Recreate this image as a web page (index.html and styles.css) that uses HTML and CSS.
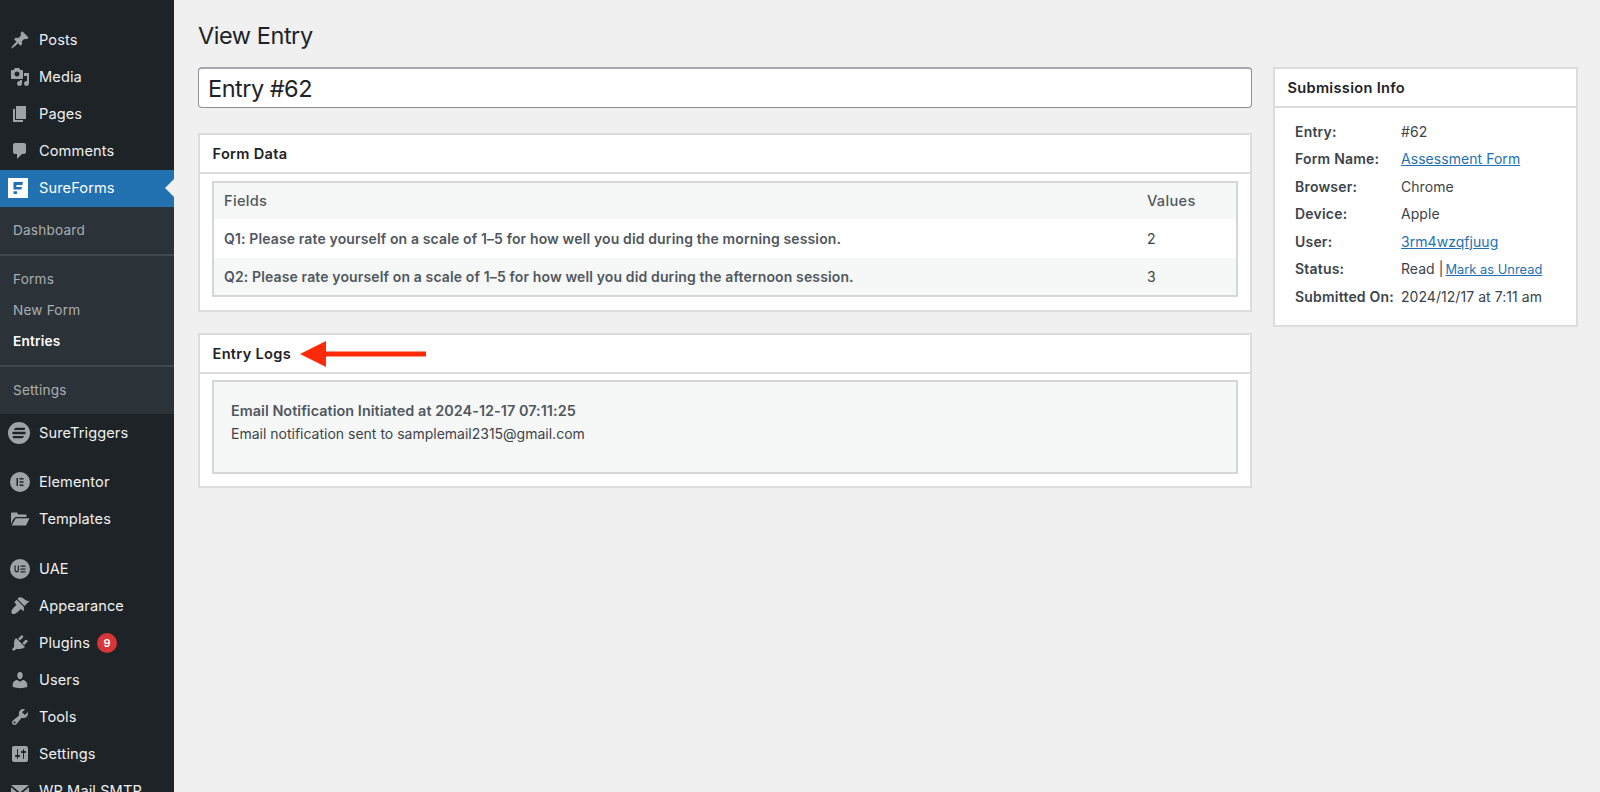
FILE: index.html
```html
<!DOCTYPE html>
<html lang="en">
<head>
<meta charset="utf-8">
<title>View Entry</title>
<link rel="stylesheet" href="styles.css">
</head>
<body>
<div class="app">
  <nav class="sidebar">
    <div class="stub"><svg class="stub-icon" viewBox="0 0 20 20"><circle cx="10" cy="10" r="8"/></svg></div>
    <a class="item"><svg class="ico" viewBox="0 0 20 20"><path d="M10.44 3.02l1.82-1.82 6.36 6.35-1.83 1.82c-1.05-.68-2.48-.57-3.41.36l-.75.75c-.92.93-1.04 2.35-.35 3.41l-1.83 1.82-2.41-2.41-2.8 2.79c-.42.42-3.38 2.71-3.8 2.29s1.86-3.39 2.28-3.81l2.79-2.79L4.1 9.36l1.83-1.82c1.05.69 2.48.57 3.4-.36l.75-.75c.93-.92 1.05-2.35.36-3.41z"/></svg><span>Posts</span></a>
    <a class="item"><svg class="ico" viewBox="0 0 20 20"><path d="M13 11V4c0-.55-.45-1-1-1h-1.67L9 1H5L3.67 3H2c-.55 0-1 .45-1 1v7c0 .55.45 1 1 1h10c.55 0 1-.45 1-1zM7 4.5c1.38 0 2.5 1.12 2.5 2.5S8.38 9.5 7 9.5 4.5 8.38 4.5 7 5.62 4.5 7 4.5zM14 6h5v10.5c0 1.38-1.12 2.5-2.5 2.5S14 17.88 14 16.5s1.12-2.5 2.5-2.5c.17 0 .34.02.5.05V9h-3V6zm-4 8.05V13h2v3.5c0 1.38-1.12 2.5-2.5 2.5S7 17.88 7 16.5 8.12 14 9.5 14c.17 0 .34.02.5.05z"/></svg><span>Media</span></a>
    <a class="item"><svg class="ico" viewBox="0 0 20 20"><path d="M6 15V2h10v13H6zm-1 1h8v2H3V5h2v11z"/></svg><span>Pages</span></a>
    <a class="item"><svg class="ico" viewBox="0 0 20 20"><path d="M5 2h9c1.1 0 2 .9 2 2v7c0 1.1-.9 2-2 2h-2l-5 5v-5H5c-1.1 0-2-.9-2-2V4c0-1.1.9-2 2-2z"/></svg><span>Comments</span></a>
    <a class="item active"><svg class="ico ico-sf" viewBox="0 0 20 20"><path class="sf-box" d="M0 0h20v20H0z"/><path class="sf-f" d="M5.500 4H15l-.6 3H8.600L8.200 9H14l-.6 2.600H5.500zM5.500 13.200H9V16H5.500z"/></svg><span>SureForms</span></a>
    <div class="submenu">
      <a class="sub">Dashboard</a>
      <div class="sub-sep"></div>
      <a class="sub">Forms</a>
      <a class="sub">New Form</a>
      <a class="sub current">Entries</a>
      <div class="sub-sep"></div>
      <a class="sub">Settings</a>
    </div>
    <a class="item"><svg class="ico ico-st" viewBox="0 0 22 22"><path fill-rule="evenodd" d="M11 0a11 11 0 1 1 0 22 11 11 0 0 1 0-22zM8 5.800c-1.200 0-1.800 1.600-2 2.200h10.300c.8 0 1.200-2.200.2-2.200zM5 9.800c-1 0-1 2.400 0 2.400h12c1 0 1-2.400 0-2.400zM5.500 14c-.8 0-1.200 2.200-.2 2.200H14c1.200 0 1.800-1.600 2-2.200z"/></svg><span>SureTriggers</span></a>
    <a class="item gap-top"><svg class="ico" viewBox="0 0 20 20"><path fill-rule="evenodd" d="M10 0a10 10 0 1 1 0 20 10 10 0 0 1 0-20zM6.500 6v8H8V6zM9.500 6v1.500h4V6zM9.500 9.250v1.500h4v-1.500zM9.500 12.500V14h4v-1.500z"/></svg><span>Elementor</span></a>
    <a class="item"><svg class="ico" viewBox="0 0 20 20"><path d="M1 4.500c0-.6.4-1 1-1h5l1.500 2h7c.6 0 1 .4 1 1V8H5.500L3 10.500 1 15zM5.800 9.200H19.500L16 16.500H1.600z"/></svg><span>Templates</span></a>
    <a class="item gap-top-lg"><svg class="ico" viewBox="0 0 20 20"><path fill-rule="evenodd" d="M10 0a10 10 0 1 1 0 20 10 10 0 0 1 0-20zM4.500 6.500v4.500c0 3.200 4.500 3.200 4.500 0V6.500H7.800V11c0 1.600-2.100 1.600-2.100 0V6.500zM10.500 6.500v1.300h5V6.500zM10.500 9.400v1.300h5V9.400zM10.500 12.300v1.300h5v-1.300z"/></svg><span>UAE</span></a>
    <a class="item"><svg class="ico" viewBox="0 0 20 20"><path d="M14.480 11.060L7.410 3.990l1.500-1.500c.5-.56 2.300-.47 3.510.32 1.210.8 1.430 1.280 2.910 2.100 1.180.64 2.450 1.260 4.450.85zm-.71.71L6.700 4.700 4.930 6.470c-.39.39-.39 1.020 0 1.410l1.060 1.060c.39.39.39 1.030 0 1.420-.6.600-6.480 5.630-3.980 8.130 2.500 2.500 7.530-3.380 8.130-3.980.39-.39 1.030-.39 1.420 0l1.060 1.060c.39.39 1.020.39 1.410 0z" transform="translate(0 -1)"/></svg><span>Appearance</span></a>
    <a class="item"><svg class="ico" viewBox="0 0 20 20"><path d="M13.110 4.360L9.870 7.600 8 5.730l3.240-3.240c.35-.34 1.050-.2 1.560.32.520.51.660 1.210.310 1.550zm-8 1.770l.91-1.120 9.010 9.010-1.190.84c-.71.71-2.630 1.160-3.820 1.160H6.140L4.900 17.260c-.59.59-1.540.59-2.120 0-.59-.58-.59-1.530 0-2.120l1.240-1.240v-3.880c0-1.130.4-3.190 1.090-3.890zm7.260 3.970l3.240-3.240c.34-.35 1.040-.21 1.550.31.520.51.660 1.210.310 1.550l-3.240 3.250z"/></svg><span>Plugins</span><b class="badge">9</b></a>
    <a class="item"><svg class="ico" viewBox="0 0 20 20"><path d="M10 9.250c-2.270 0-2.730-3.440-2.730-3.440C7 4.020 7.820 2 9.970 2c2.160 0 2.980 2.020 2.710 3.810 0 0-.41 3.440-2.680 3.440zm0 2.570L12.720 10c2.390 0 4.520 2.330 4.520 4.530v2.490s-3.650 1.130-7.240 1.130c-3.650 0-7.240-1.130-7.240-1.130v-2.490c0-2.250 1.940-4.480 4.470-4.480z"/></svg><span>Users</span></a>
    <a class="item"><svg class="ico" viewBox="0 0 20 20"><path d="M16.680 9.770c-1.340 1.340-3.300 1.670-4.950.99l-5.410 6.520c-.99.99-2.590.99-3.580 0s-.99-2.590 0-3.570l6.520-5.420c-.68-1.650-.35-3.610.99-4.950 1.280-1.280 3.120-1.620 4.720-1.060l-2.890 2.890 2.820 2.820 2.860-2.870c.53 1.580.18 3.390-1.080 4.650zM3.810 16.210c.4.390 1.040.39 1.430 0 .4-.4.4-1.040 0-1.430-.39-.4-1.030-.4-1.430 0-.39.39-.39 1.030 0 1.430z"/></svg><span>Tools</span></a>
    <a class="item"><svg class="ico" viewBox="0 0 20 20"><path d="M18 16V4c0-1.100-.9-2-2-2H4c-1.100 0-2 .9-2 2v12c0 1.100.9 2 2 2h12c1.100 0 2-.9 2-2zM8 11h1c.55 0 1 .45 1 1s-.45 1-1 1H8v1.500c0 .28-.22.5-.5.5s-.5-.22-.5-.5V13H6c-.55 0-1-.45-1-1s.45-1 1-1h1V5.500c0-.28.22-.5.5-.5s.5.22.5.5V11zm5-2h-1c-.55 0-1-.45-1-1s.45-1 1-1h1V5.500c0-.28.22-.5.5-.5s.5.22.5.5V7h1c.55 0 1 .45 1 1s-.45 1-1 1h-1v5.500c0 .28-.22.5-.5.5s-.5-.22-.5-.5V9z"/></svg><span>Settings</span></a>
    <a class="item"><svg class="ico" viewBox="0 0 20 20"><path d="M1 4h18L10 11.500zM1 6.200l9 7.500 9-7.500V16H1z"/></svg><span>WP Mail SMTP</span></a>
  </nav>

  <main class="content">
    <h1 class="page-title">View Entry</h1>
    <div class="columns">
      <div class="col-main">
        <div class="title-box">Entry #62</div>
        <section class="card card-form">
          <h2 class="card-head">Form Data</h2>
          <div class="card-body body-form">
            <table class="data">
              <thead><tr><th>Fields</th><th class="val">Values</th></tr></thead>
              <tbody>
                <tr><td class="q">Q1: Please rate yourself on a scale of 1–5 for how well you did during the morning session.</td><td class="val">2</td></tr>
                <tr class="alt"><td class="q">Q2: Please rate yourself on a scale of 1–5 for how well you did during the afternoon session.</td><td class="val">3</td></tr>
              </tbody>
            </table>
          </div>
        </section>
        <section class="card">
          <h2 class="card-head">Entry Logs
            <svg class="annot" viewBox="0 0 126 26"><path d="M0 13L26 0v10.500h100v5H26V26z"/></svg>
          </h2>
          <div class="card-body">
            <div class="log">
              <p class="log-title">Email Notification Initiated at 2024-12-17 07:11:25</p>
              <p class="log-line">Email notification sent to samplemail2315@gmail.com</p>
            </div>
          </div>
        </section>
      </div>
      <aside class="col-side">
        <section class="card">
          <h2 class="card-head">Submission Info</h2>
          <dl class="info">
            <dt>Entry:</dt><dd>#62</dd>
            <dt>Form Name:</dt><dd><a class="link">Assessment Form</a></dd>
            <dt>Browser:</dt><dd>Chrome</dd>
            <dt>Device:</dt><dd>Apple</dd>
            <dt>User:</dt><dd><a class="link">3rm4wzqfjuug</a></dd>
            <dt>Status:</dt><dd>Read | <a class="link small">Mark as Unread</a></dd>
            <dt>Submitted On:</dt><dd>2024/12/17 at 7:11 am</dd>
          </dl>
        </section>
      </aside>
    </div>
  </main>
</div>
</body>
</html>
```
FILE: styles.css
```css
* { box-sizing: border-box; }
html, body { margin: 0; height: 100%; overflow: hidden; }
body { background: #f0f0f1; font-family: Inter, "Liberation Sans", sans-serif; font-size: 14px; color: #3c434a; }
.app { display: flex; height: 792px; overflow: hidden; }

.sidebar { width: 174px; flex: none; height: 792px; overflow: hidden; background: #1d2327; color: #f0f0f1; }
.stub { height: 21.500px; overflow: hidden; }
.stub-icon { display: block; width: 20px; height: 20px; margin: -18px 0 0 10px; fill: #a7aaad; }
.item { display: flex; align-items: center; height: 37px; padding-left: 10px; font-size: 14.600px; letter-spacing: .1px; position: relative; white-space: nowrap; }
.item span { margin-left: 9px; }
.ico { width: 20px; height: 20px; flex: none; fill: #9ea3a8; }
.ico-sf { margin: -1px 2px 0 -2px; }
.ico-st { width: 22px; height: 22px; margin: 0 0 0 -2px; }
.gap-top { margin-top: 12px; }
.gap-top-lg { margin-top: 13.200px; }
.active { background: #2271b1; color: #fff; }
.active::after { content: ""; position: absolute; right: 0; top: 9px; border: 9px solid transparent; border-left: 0; border-right-color: #f0f0f1; }
.sf-box { fill: #fff; }
.sf-f { fill: #2271b1; }
.badge { margin-left: 7px; width: 20px; height: 20px; border-radius: 50%; background: #d63638; color: #fff; font-size: 11px; font-weight: 600; letter-spacing: 0; display: flex; align-items: center; justify-content: center; }
.submenu { background: #2c3338; padding: 8px 0 8.500px; }
.sub { display: flex; align-items: center; height: 31px; padding-left: 13px; font-size: 13.600px; letter-spacing: .2px; color: #a9aeb3; }
.current { color: #fff; font-weight: 600; }
.sub-sep { height: 2px; margin: 8px 0; background: #41484e; }

.content { flex: 1; padding: 0 22px 0 24px; min-width: 0; }
.page-title { margin: 0; height: 67px; padding-top: 20px; font-size: 23.500px; line-height: 32px; font-weight: 400; letter-spacing: -.45px; color: #1d2327; }
.columns { display: flex; gap: 21px; align-items: flex-start; }
.col-main { width: 1054px; flex: none; }
.col-side { width: 305px; flex: none; }
.title-box { height: 41px; padding-left: 9px; display: flex; align-items: center; background: #fff; border: 1px solid #8c8f94; border-top: 2px solid #a5a7ab; border-radius: 4px; font-size: 23.500px; letter-spacing: -.5px; color: #1d2327; margin-bottom: 25px; }

.card { background: #fff; border: 2px solid #dcdcde; margin-bottom: 21px; }
.card-head { margin: 0; height: 39px; padding-left: 12.500px; display: flex; align-items: center; position: relative; border-bottom: 2px solid #dcdcde; font-size: 14.600px; letter-spacing: .3px; font-weight: 600; color: #1d2327; }
.annot { position: absolute; left: 100px; top: 6px; width: 126px; height: 26px; fill: #ff2a0a; }
.card-body { padding: 6px 12px 12px; }
.body-form { padding: 7px 12px 13px; }

.data { width: 100%; border-collapse: collapse; border: 2px solid #d4d6d7; table-layout: fixed; }
.data th { height: 37px; padding: 0 0 0 10px; background: #f6f7f7; text-align: left; font-size: 14.600px; letter-spacing: .3px; font-weight: 500; color: #50575e; }
.data td { height: 39px; padding: 0 0 0 10px; font-size: 14px; letter-spacing: .13px; }
.data .alt td { height: 38px; }
.data .q { font-weight: 600; color: #50575e; }
.data .val { width: 100px; }
.alt { background: #f6f7f7; }

.log { height: 94px; padding: 16.500px 17px; background: #f6f7f7; border: 2px solid #d4d6d7; }
.log p { margin: 0; line-height: 23px; }
.log-title { font-weight: 600; font-size: 14.400px; letter-spacing: .05px; color: #50575e; }
.log-line { font-size: 14px; }

.info { display: grid; grid-template-columns: 106px 1fr; grid-auto-rows: 27.500px; align-items: center; margin: 0; padding: 9.500px 0 15px 20px; }
.info dt { font-weight: 600; letter-spacing: .2px; color: #3c434a; white-space: nowrap; }
.info dd { margin: 0; letter-spacing: .05px; color: #3c434a; white-space: nowrap; }
.link { color: #2271b1; text-decoration: underline; }
.small { font-size: 12.800px; margin-left: -2px; }
```
